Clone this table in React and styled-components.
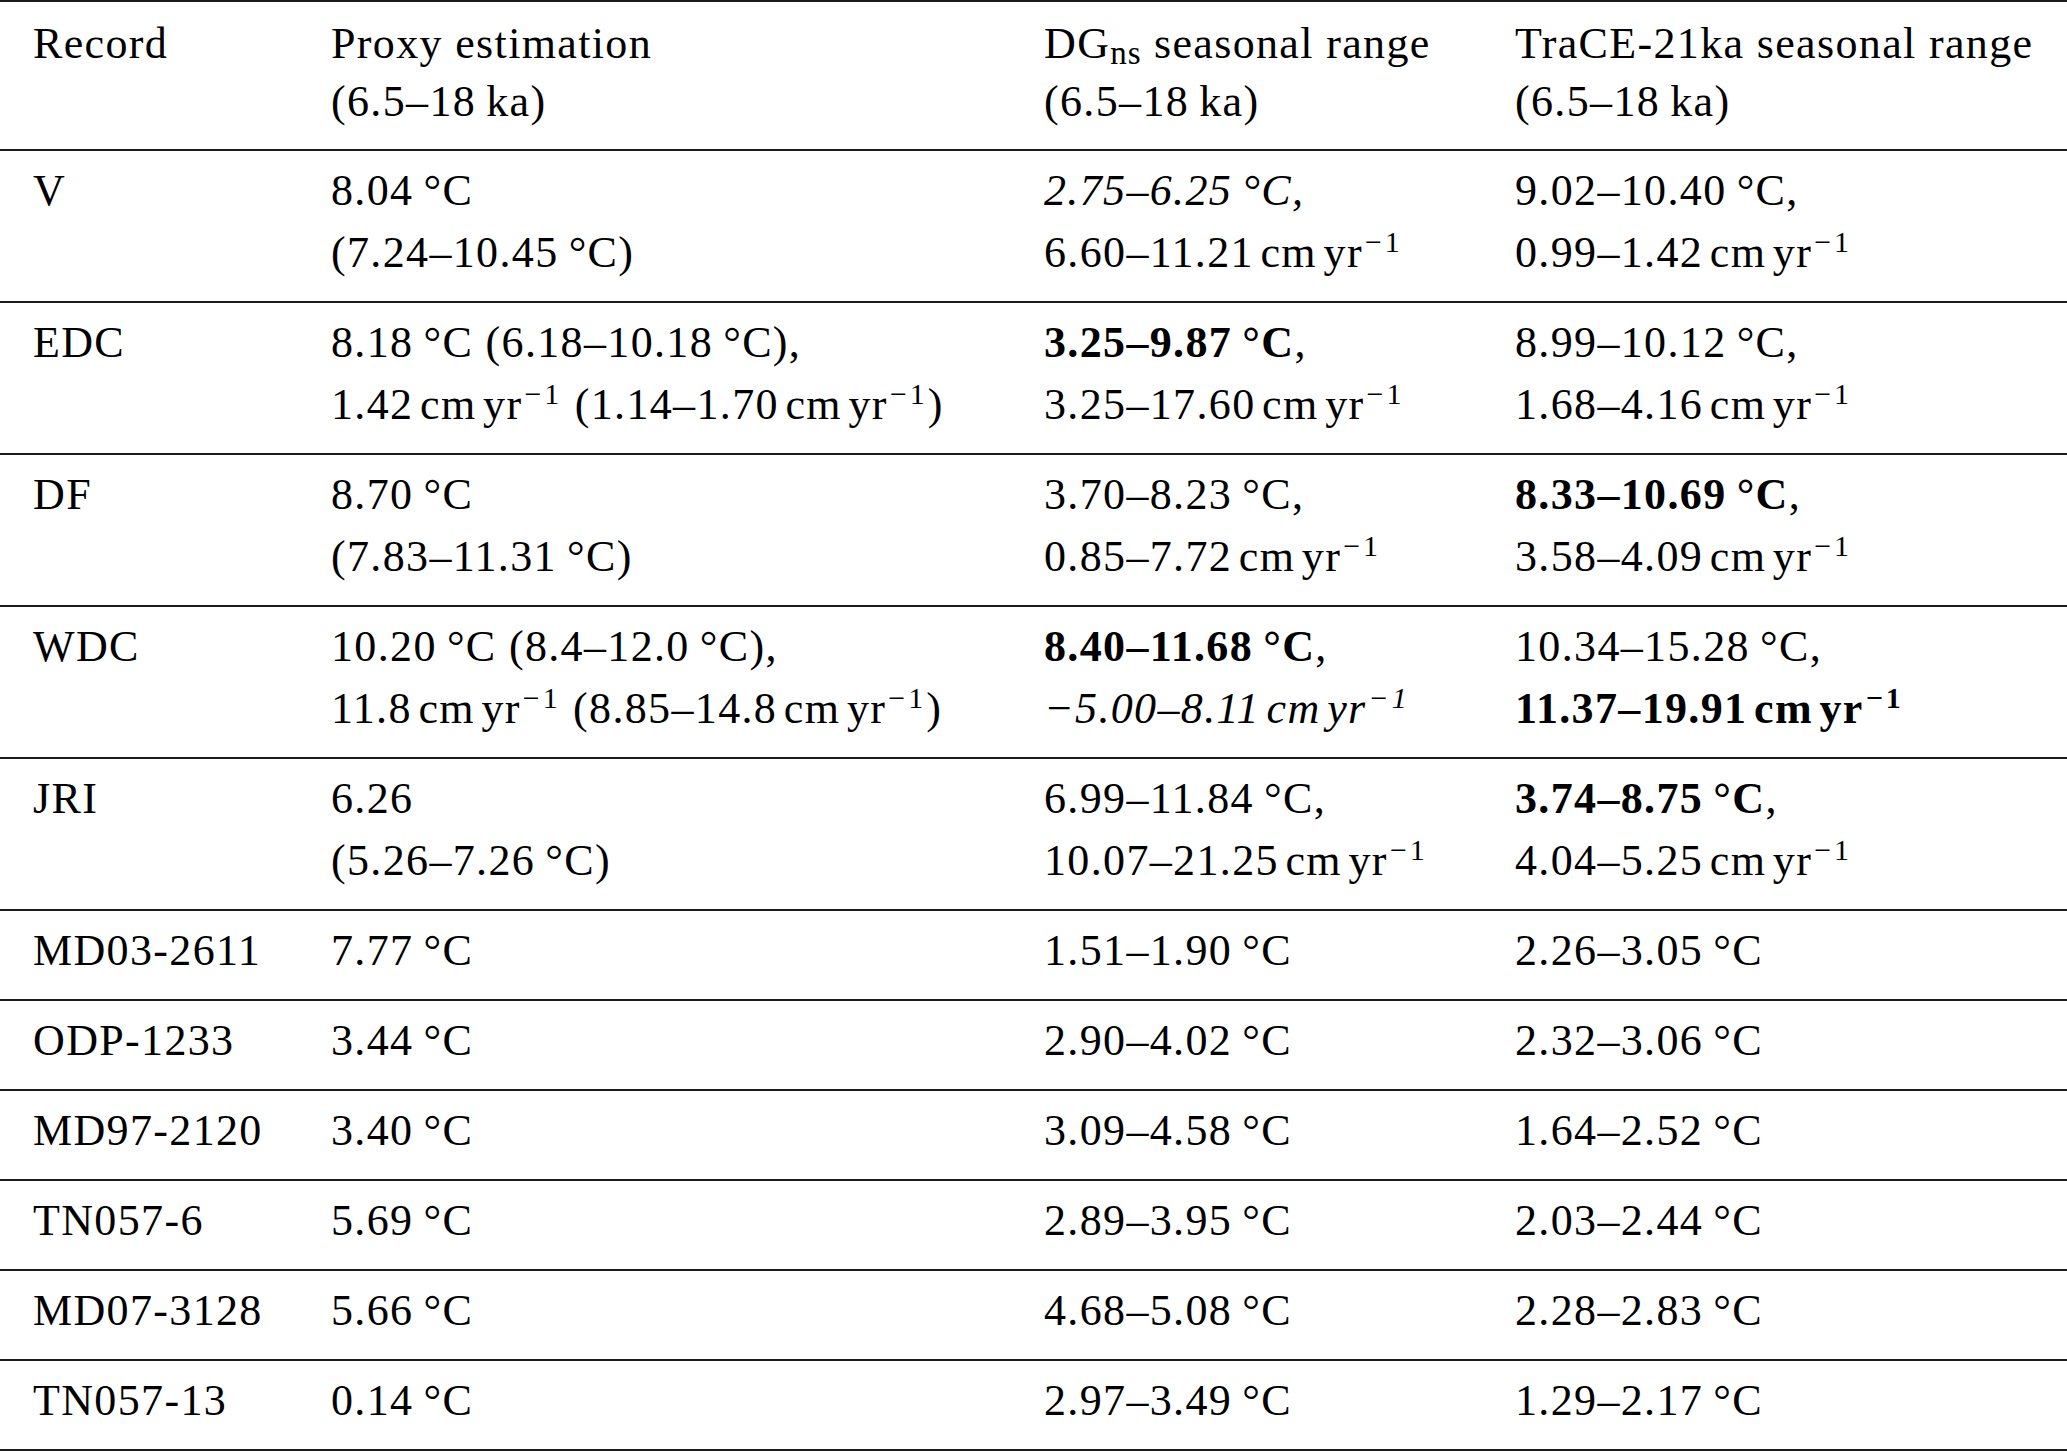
import React from 'react';
import styled, { createGlobalStyle } from 'styled-components';

// --- Styled Components ---
const GlobalStyle = createGlobalStyle`
  html, body {
    margin: 0;
    padding: 0;
    background: #ffffff;
  }
  body {
    font-family: "Liberation Serif", "Times New Roman", serif;
    color: #000;
  }
`;

const Table = styled.div`
  width: 2067px;
  border-top: 2px solid #1c1c1c;
  font-size: 44px;
  letter-spacing: 1.35px;
`;

const rowPadding = (p) => {
  if (p.$head) return '13px 0 18px';
  if (p.$single) return '9px 0 17.5px';
  return '9px 0 18px';
};

const Row = styled.div`
  display: grid;
  grid-template-columns: 298px 713px 471px 1fr;
  border-bottom: 2px solid #1c1c1c;
  padding: ${rowPadding};
  line-height: ${(p) => (p.$head ? '58px' : '61.5px')};
`;

const Cell = styled.div`
  padding-left: 33px;
  white-space: nowrap;
`;

const Line = styled.div``;

const Thin = styled.span`
  display: inline-block;
  width: 0.15em;
`;

const Sup = styled.span`
  font-size: 30px;
  vertical-align: 15px;
  line-height: 0;
  margin-left: 2px;
  letter-spacing: 3px;
`;

const Sub = styled.span`
  font-size: 33px;
  vertical-align: -6px;
  line-height: 0;
  letter-spacing: 1px;
`;

const Strong = styled.b`
  font-weight: 700;
`;

const Em = styled.i`
  font-style: italic;
`;

// marks in the strings: CMYR -> "cm yr^-1"
const Unit = () => (
  <>
    cm<Thin />yr<Sup>−1</Sup>
  </>
);

const fmt = (text) =>
  text
    .replace(/ °C/g, '\u2009°C')
    .replace(/ ka/g, '\u2009ka')
    .split(/ ?(CMYR)/)
    .map((part, i) =>
      part === 'CMYR' ? (
        <React.Fragment key={i}>
          <Thin />
          <Unit />
        </React.Fragment>
      ) : (
        <React.Fragment key={i}>{part}</React.Fragment>
      )
    );

const L = (text) => fmt(text);
const B = (text, tail = '') => (
  <>
    <Strong>{fmt(text)}</Strong>
    {tail}
  </>
);
const I = (text) => <Em>{fmt(text)}</Em>;

const rows = [
  {
    rec: 'V',
    proxy: [L('8.04 °C'), L('(7.24–10.45 °C)')],
    dg: [I('2.75–6.25 °C,'), L('6.60–11.21 CMYR')],
    trace: [L('9.02–10.40 °C,'), L('0.99–1.42 CMYR')],
  },
  {
    rec: 'EDC',
    proxy: [L('8.18 °C (6.18–10.18 °C),'), L('1.42 CMYR (1.14–1.70 CMYR)')],
    dg: [B('3.25–9.87 °C', ','), L('3.25–17.60 CMYR')],
    trace: [L('8.99–10.12 °C,'), L('1.68–4.16 CMYR')],
  },
  {
    rec: 'DF',
    proxy: [L('8.70 °C'), L('(7.83–11.31 °C)')],
    dg: [L('3.70–8.23 °C,'), L('0.85–7.72 CMYR')],
    trace: [B('8.33–10.69 °C', ','), L('3.58–4.09 CMYR')],
  },
  {
    rec: 'WDC',
    proxy: [L('10.20 °C (8.4–12.0 °C),'), L('11.8 CMYR (8.85–14.8 CMYR)')],
    dg: [B('8.40–11.68 °C', ','), I('−5.00–8.11 CMYR')],
    trace: [L('10.34–15.28 °C,'), B('11.37–19.91 CMYR')],
  },
  {
    rec: 'JRI',
    proxy: [L('6.26'), L('(5.26–7.26 °C)')],
    dg: [L('6.99–11.84 °C,'), L('10.07–21.25 CMYR')],
    trace: [B('3.74–8.75 °C', ','), L('4.04–5.25 CMYR')],
  },
  { rec: 'MD03-2611', proxy: [L('7.77 °C')], dg: [L('1.51–1.90 °C')], trace: [L('2.26–3.05 °C')] },
  { rec: 'ODP-1233', proxy: [L('3.44 °C')], dg: [L('2.90–4.02 °C')], trace: [L('2.32–3.06 °C')] },
  { rec: 'MD97-2120', proxy: [L('3.40 °C')], dg: [L('3.09–4.58 °C')], trace: [L('1.64–2.52 °C')] },
  { rec: 'TN057-6', proxy: [L('5.69 °C')], dg: [L('2.89–3.95 °C')], trace: [L('2.03–2.44 °C')] },
  { rec: 'MD07-3128', proxy: [L('5.66 °C')], dg: [L('4.68–5.08 °C')], trace: [L('2.28–2.83 °C')] },
  { rec: 'TN057-13', proxy: [L('0.14 °C')], dg: [L('2.97–3.49 °C')], trace: [L('1.29–2.17 °C')] },
];

const Lines = ({ items }) =>
  items.map((line, i) => <Line key={i}>{line}</Line>);

const App = () => (
  <>
    <GlobalStyle />
    <Table>
      <Row $head>
        <Cell>
          <Line>Record</Line>
        </Cell>
        <Cell>
          <Line>Proxy estimation</Line>
          <Line>{fmt('(6.5–18 ka)')}</Line>
        </Cell>
        <Cell>
          <Line>
            DG<Sub>ns</Sub> seasonal range
          </Line>
          <Line>{fmt('(6.5–18 ka)')}</Line>
        </Cell>
        <Cell>
          <Line>TraCE-21ka seasonal range</Line>
          <Line>{fmt('(6.5–18 ka)')}</Line>
        </Cell>
      </Row>
      {rows.map((r) => (
        <Row key={r.rec} $single={r.proxy.length === 1}>
          <Cell>
            <Line>{r.rec}</Line>
          </Cell>
          <Cell>
            <Lines items={r.proxy} />
          </Cell>
          <Cell>
            <Lines items={r.dg} />
          </Cell>
          <Cell>
            <Lines items={r.trace} />
          </Cell>
        </Row>
      ))}
    </Table>
  </>
);

export default App;
